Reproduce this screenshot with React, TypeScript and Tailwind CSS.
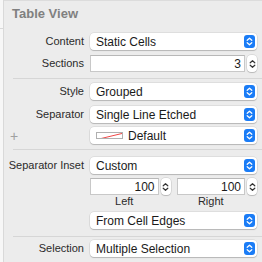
import React from "react";

const font = { fontFamily: '"Liberation Sans", Arial, sans-serif' };

function Chevrons({ color, size = 9 }: { color: string; size?: number }) {
  return (
    <svg width="7" height={size} viewBox="0 0 7 9" fill="none">
      <path d="M1.2 3.3 L3.5 1.2 L5.8 3.3" stroke={color} strokeWidth="1.2" strokeLinecap="round" strokeLinejoin="round" />
      <path d="M1.2 5.7 L3.5 7.8 L5.8 5.7" stroke={color} strokeWidth="1.2" strokeLinecap="round" strokeLinejoin="round" />
    </svg>
  );
}

function Popup({ children, className = "" }: { children: React.ReactNode; className?: string }) {
  return (
    <div
      className={`h-[17px] bg-white rounded-[4px] flex items-center pl-[6px] pr-[2px] shadow-[0_0_0_0.5px_rgba(0,0,0,0.12),0_1px_1px_rgba(0,0,0,0.18)] ${className}`}
    >
      <div className="flex-1 flex items-center text-[12px] text-[#1a1a1a] leading-none whitespace-nowrap">{children}</div>
      <div className="w-[11px] h-[13px] rounded-[3px] bg-[#1a7cf6] flex items-center justify-center">
        <Chevrons color="#ffffff" />
      </div>
    </div>
  );
}

function Stepper() {
  return (
    <div className="w-[10px] h-[17px] bg-white rounded-[4px] flex items-center justify-center shadow-[0_0_0_0.5px_rgba(0,0,0,0.15),0_1px_1px_rgba(0,0,0,0.15)]">
      <Chevrons color="#333333" size={12} />
    </div>
  );
}

function Field({ value }: { value: string }) {
  return (
    <div className="flex-1 h-[17px] bg-white border border-[#c8c8c8] border-t-[#b8b8b8] flex items-center justify-end pr-[3px] text-[12px] text-[#1a1a1a] leading-none">
      {value}
    </div>
  );
}

function Label({ children }: { children: React.ReactNode }) {
  return <div className="w-[80px] text-right text-[11px] text-[#2a2a2a] leading-none pr-0">{children}</div>;
}

function Row({ label, children, className = "" }: { label?: string; children: React.ReactNode; className?: string }) {
  return (
    <div className={`flex items-center ${className}`}>
      <Label>{label}</Label>
      <div className="flex-1 ml-[6px] mr-[5px]">{children}</div>
    </div>
  );
}

function Divider({ className = "" }: { className?: string }) {
  return <div className={`ml-[9px] h-px bg-[#d6d6d6] ${className}`} />;
}

export default function App() {
  return (
    <div className="w-[262px] h-[262px] bg-[#ececec] flex overflow-hidden" style={font}>
      <div className="w-[4px] h-full bg-[#f7f7f7] border-r border-[#d9d9d9] flex flex-col">
        <div className="h-[29px] border-b border-[#d9d9d9]" />
      </div>
      <div className="flex-1 flex flex-col border-t border-[#dcdcdc]">
        <div className="mt-[5px] ml-[8px] text-[13px] font-bold text-[#808080] leading-[16px]">Table View</div>

        <Row label="Content" className="mt-[11px]">
          <Popup>Static Cells</Popup>
        </Row>

        <Row label="Sections" className="mt-[5px]">
          <div className="flex items-center gap-[2px]">
            <Field value="3" />
            <Stepper />
          </div>
        </Row>

        <Divider className="mt-[6px]" />

        <Row label="Style" className="mt-[4px]">
          <Popup>Grouped</Popup>
        </Row>

        <Row label="Separator" className="mt-[6px]">
          <Popup>Single Line Etched</Popup>
        </Row>

        <div className="flex items-center mt-[4px]">
          <div className="w-[80px] pl-[6px] text-[14px] leading-none text-[#a0a0a0]">+</div>
          <div className="flex-1 ml-[6px] mr-[5px]">
            <Popup>
              <div className="w-[27px] h-[7px] bg-white border border-[#b0b0b0] mr-[5px] relative overflow-hidden">
                <svg width="27" height="7" viewBox="0 0 27 7" className="absolute inset-0">
                  <line x1="0" y1="6.5" x2="27" y2="0" stroke="#e33" strokeWidth="0.9" />
                </svg>
              </div>
              Default
            </Popup>
          </div>
        </div>

        <Divider className="mt-[5px]" />

        <Row label="Separator Inset" className="mt-[7px]">
          <Popup>Custom</Popup>
        </Row>

        <div className="flex mt-[4px] ml-[86px] mr-[5px] gap-[6px]">
          <div className="flex-1 flex flex-col items-stretch">
            <div className="flex items-center gap-[2px]">
              <Field value="100" />
              <Stepper />
            </div>
            <div className="pr-[12px] text-center text-[11px] text-[#2a2a2a] leading-[11px] mt-[1px]">Left</div>
          </div>
          <div className="flex-1 flex flex-col items-stretch">
            <div className="flex items-center gap-[2px]">
              <Field value="100" />
              <Stepper />
            </div>
            <div className="pr-[12px] text-center text-[11px] text-[#2a2a2a] leading-[11px] mt-[1px]">Right</div>
          </div>
        </div>

        <Row className="mt-[5px]">
          <Popup>From Cell Edges</Popup>
        </Row>

        <Divider className="mt-[7px]" />

        <Row label="Selection" className="mt-[3px]">
          <Popup>Multiple Selection</Popup>
        </Row>
      </div>
    </div>
  );
}
